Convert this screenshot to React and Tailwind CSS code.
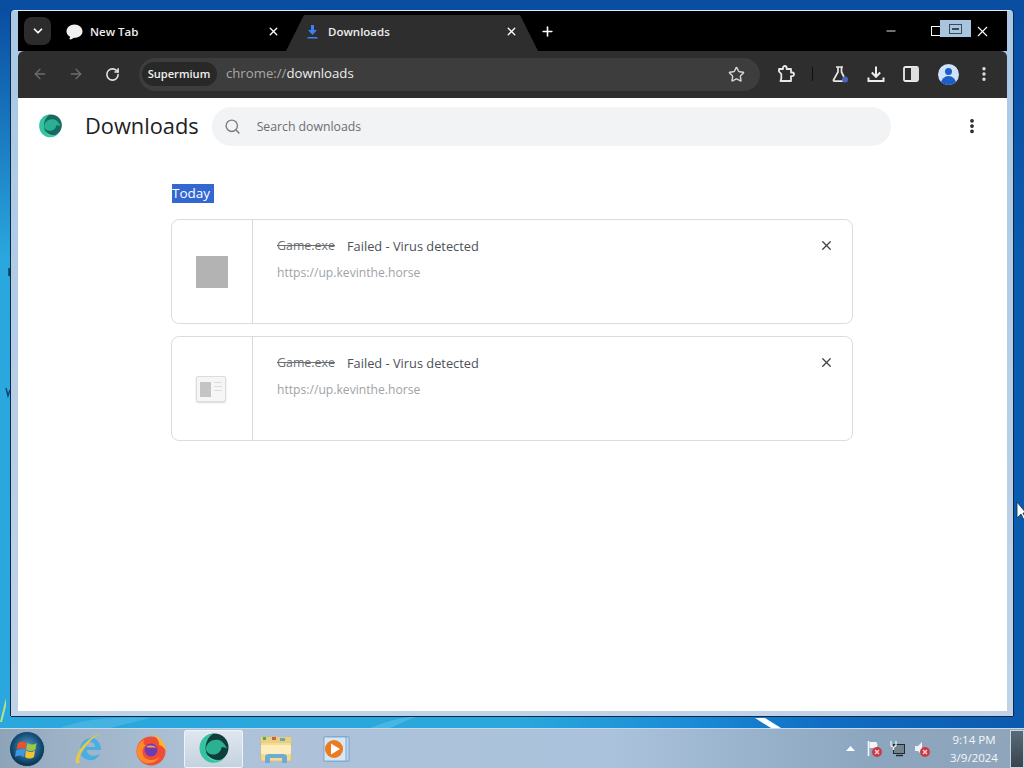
import React from "react";
import { ArrowLeft, ArrowRight, RotateCw, Star, MoreVertical, X, Plus, ChevronDown, Search, Minus } from "lucide-react";

const font = "font-['Open_Sans','Noto_Sans',sans-serif]";

function Logo({ size = 24, dark = false }) {
  return (
    <svg width={size} height={size} viewBox="0 0 32 32">
      <circle cx="16.500" cy="14.500" r="14" fill={dark ? "#0f3d3c" : "#166a5f"} />
      <path d="M15 .7C7 1 1.500 7.500 1.500 15c0 7 4.500 13 11 14.500 5 1 10-.5 13-3.500-5 2-12 1-16-4C6 17 7 6 15 .7Z" fill="#34c4a2" />
      <path d="M8 15c1-6 7-9.500 13-8 3 1 6 4 8 8.500-2-1-4-1.500-5.500-1-.5 4-4 7.500-9 7C10 21 7.500 18 8 15Z" fill="#2bb092" />
      <path d="M9 22c2 4 6 6 10 5.500 2.500 0 5-1 6.500-1.500-5 2.500-12 2-16.500-4Z" fill="#9ae6d2" />
    </svg>
  );
}

function WinFlag() {
  return (
    <svg width="36" height="36" viewBox="0 0 36 36">
      <defs>
        <radialGradient id="orb" cx="50%" cy="45%" r="55%">
          <stop offset="0%" stopColor="#5a9fd4" />
          <stop offset="70%" stopColor="#165078" />
          <stop offset="100%" stopColor="#0b2c42" />
        </radialGradient>
      </defs>
      <circle cx="18" cy="18" r="17.500" fill="url(#orb)" stroke="#a5c0d4" strokeWidth="0.7" />
      <path d="M9 12c3-2 6-2 8.500 0l-1 6.500c-3-2-6-2-9 0Z" fill="#e8532a" />
      <path d="M18.500 12c3 2 6 2 9 0l-1 6.500c-3 2-6 2-9 0Z" fill="#9cc93f" />
      <path d="M7 19.500c3-2 6-2 9 0l-1 6.500c-3-2-6-2-9 0Z" fill="#3c9ae0" />
      <path d="M17 19.500c3 2 6 2 9 0l-1 6.500c-3 2-6 2-9 0Z" fill="#f5c22f" />
    </svg>
  );
}

function IE() {
  return (
    <svg width="32" height="36" viewBox="0 0 32 36">
      <path d="M6 20c0-8 5-13 11-13s10 5 10 12H13c0 6 8 8 13 3-2 6-7 8-11 7-6-1-9-5-9-9Zm7-4h8c0-3-2-5-4-5s-4 2-4 5Z" fill="#49aee2" />
      <path d="M2 32C0 24 12 6 28 2c-7 3-10 6-14 11C9 19 3 27 6 31c-1 1-3 2-4 1Z" fill="#e8c84a" />
    </svg>
  );
}

function Firefox() {
  return (
    <svg width="32" height="34" viewBox="0 0 32 34">
      <circle cx="16" cy="19" r="14.500" fill="#ef4d35" />
      <path d="M16 1c7 3 15 8 15 18-2-4-5-6-7-6 1-3-2-8-8-12Z" fill="#fbb63a" />
      <path d="M2 17c1-5 4-8 7-9-1 3 0 5 2 5-4 3-5 9-1 13 4 3 11 3 15-2-3 7-12 9-17 6-5-3-7-8-6-13Z" fill="#ff8a2b" />
      <circle cx="16" cy="18" r="6.500" fill="#6f3bb5" />
      <path d="M11 15c3-2 8-2 10 1-3-1-7 0-10-1Z" fill="#f5a33a" />
    </svg>
  );
}

function Folder() {
  return (
    <svg width="32" height="30" viewBox="0 0 32 30">
      <path d="M1 3h30v24H1Z" fill="#f4db8d" stroke="#d9bd6c" strokeWidth="0.6" />
      <rect x="1" y="3" width="30" height="6" fill="#e9cf80" />
      <rect x="3" y="3" width="3" height="3" fill="#5aa845" />
      <rect x="12" y="3" width="4" height="3" fill="#c9653a" />
      <rect x="20" y="4" width="5" height="3" fill="#6aa3c9" />
      <rect x="1" y="11" width="30" height="9" fill="#fbeebc" />
      <path d="M5 29v-6c0-2 2-3 4-3h14c2 0 4 1 4 3v6h-5v-5H10v5Z" fill="#6eaad6" />
    </svg>
  );
}

function Media() {
  return (
    <svg width="28" height="26" viewBox="0 0 28 26">
      <rect x="5" y="1" width="22" height="24" fill="#bcd7ee" stroke="#6e9dc6" strokeWidth="0.8" />
      <rect x="2" y="1" width="22" height="24" fill="#d5e6f4" stroke="#6e9dc6" strokeWidth="0.8" />
      <circle cx="12" cy="13" r="9" fill="#ec7a1f" />
      <path d="M9 7.500l9 5.500-9 5.500Z" fill="#fff" />
    </svg>
  );
}

function Badge({ x, y }) {
  return (
    <g>
      <circle cx={x} cy={y} r="5" fill="#c93a44" />
      <path d={`M${x - 2} ${y - 2}l4 4m0-4l-4 4`} stroke="#f7dada" strokeWidth="1.300" />
    </g>
  );
}

function TrayFlag() {
  return (
    <svg width="16" height="18" viewBox="0 0 16 18">
      <path d="M1.500 1v15" stroke="#f5f5f5" strokeWidth="1.600" />
      <path d="M2.500 2h7l1 3-1 3h-7Z" fill="#f5f5f5" />
      <Badge x={10} y={12} />
    </svg>
  );
}

function TrayNet() {
  return (
    <svg width="16" height="18" viewBox="0 0 16 18">
      <rect x="3.500" y="4.500" width="11" height="9" fill="#75838f" stroke="#1f2a33" />
      <path d="M6 15.500h7" stroke="#1f2a33" strokeWidth="1.500" />
      <path d="M1 1v4a2 2 0 002 2h1a2 2 0 002-2V1M3.500 7v3" stroke="#f2f2f2" fill="none" strokeWidth="1.200" />
    </svg>
  );
}

function TraySpeaker() {
  return (
    <svg width="17" height="18" viewBox="0 0 17 18">
      <path d="M1 6h3l4-4v13l-4-4H1Z" fill="#eef1f4" />
      <Badge x={11} y={12} />
    </svg>
  );
}

function ExtensionIcon() {
  return (
    <svg width="18" height="18" viewBox="0 0 18 18" fill="none" stroke="#e8e8e8" strokeWidth="1.800" strokeLinejoin="round">
      <path d="M2 4h4V2.800a1.800 1.800 0 013.600 0V4H14v3.500h1.200a1.800 1.800 0 010 3.600H14V16H3.500l.8-2.500V9L2 6.500Z" />
    </svg>
  );
}

function FlaskIcon() {
  return (
    <svg width="18" height="18" viewBox="0 0 18 18">
      <path d="M5 2h7M7 2v5l-4.500 8c-.3.700 0 1.200.8 1.200H13M10.500 2v5l2.500 5" fill="none" stroke="#e8e8e8" strokeWidth="1.700" />
      <circle cx="14" cy="14.500" r="3" fill="#4a66c0" />
    </svg>
  );
}

function DownloadIcon({ color = "#ededed" }) {
  return (
    <svg width="18" height="18" viewBox="0 0 18 18" fill="none" stroke={color} strokeWidth="2">
      <path d="M9 1.500v10M4.800 7.500L9 11.800l4.200-4.300M1.500 12.500v3.500h15v-3.500" />
    </svg>
  );
}

function TabDownload() {
  return (
    <svg width="11" height="14" viewBox="0 0 11 14" className="shrink-0">
      <path d="M4 0h3v5h3L5.500 10 1 5h3Z" fill="#3b82f0" />
      <rect x="0.500" y="12" width="10" height="1.500" fill="#3b82f0" />
    </svg>
  );
}

function SidePanelIcon() {
  return (
    <svg width="16" height="16" viewBox="0 0 16 16">
      <rect x="1" y="1" width="14" height="14" rx="1.500" fill="none" stroke="#ededed" strokeWidth="1.800" />
      <rect x="8" y="1" width="7" height="14" fill="#dedede" />
    </svg>
  );
}

function DownloadCard({ second }) {
  return (
    <div className="flex h-[105px] rounded-lg border border-[#dadce0] bg-white">
      <div className={`flex w-[81px] shrink-0 items-center justify-center border-r border-[#d5d7da] ${second ? "pr-[2px]" : ""}`}>
        {second ? (
          <div className="flex h-[26px] w-[30px] gap-[3px] rounded-[2px] border border-[#dcdcdc] bg-[#f6f6f6] p-[3px] shadow-[0_1px_2px_rgba(0,0,0,0.15)]">
            <div className="mt-[2px] h-[15px] w-[11px] bg-[#c4c4c4]" />
            <div className="flex flex-1 flex-col items-end gap-[3px] pt-[2px]">
              <div className="h-[1px] w-full bg-[#dcdcdc]" />
              <div className="h-[1px] w-full bg-[#dcdcdc]" />
              <div className="h-[1px] w-full bg-[#dcdcdc]" />
            </div>
          </div>
        ) : (
          <div className="h-[32px] w-[32px] bg-[#b3b3b3]" />
        )}
      </div>
      <div className="relative flex-1 pl-[24px] pt-[16px] pr-[16px]">
        <div className={`flex items-center leading-[20px] ${font}`}>
          <span className="text-[12.400px] text-[#6b6f73] line-through">Game.exe</span>
          <span className="ml-[12px] text-[12.800px] text-[#4d5156]">Failed - Virus detected</span>
        </div>
        <div className={`mt-[7px] text-[12.150px] leading-[20px] text-[#a0a3a7] ${font}`}>https://up.kevinthe.horse</div>
        <X size={15} strokeWidth={2} className="absolute right-[18px] top-[18px] text-[#3c4043]" />
      </div>
    </div>
  );
}

export default function App() {
  return (
    <div className={`relative flex h-[768px] w-[1024px] flex-col overflow-hidden ${font}`}>
      <div className="relative flex min-h-0 flex-1 flex-col bg-[linear-gradient(180deg,#0a4ea2_0px,#0a4ea2_12px,rgba(10,78,162,0)_260px),linear-gradient(90deg,#2aa8de_0%,#2aa8dc_50%,#1a8ad6_68%,#0f6fc4_80%,#0a5aae_100%)] pt-[10px] pl-[11px] pr-[11px] pb-[12px]">
        <svg className="absolute inset-0" width="1024" height="728" viewBox="0 0 1024 728">
          <path d="M755 718h10l16 10h-10Z" fill="#ffffff" />
          <path d="M60 728c20-8 50-12 90-10l-40 10Z" fill="#ffffff" fillOpacity="0.13" />
          <path d="M370 728c20-8 30-10 50-12-15 4-20 8-30 12Z" fill="#ffffff" fillOpacity="0.15" />
          <path d="M0 722l6-24v8l-4 16Z" fill="#bde08a" />
          <path d="M9 268v8l1-2Z" stroke="#0d3b66" strokeWidth="1.500" />
          <path d="M6 388l2 8 2-6" stroke="#0d3b66" strokeWidth="1.300" fill="none" />
        </svg>
        <div className="relative flex min-h-0 flex-1 flex-col rounded-t-[4px] border-t border-[#dfeaf3] bg-[linear-gradient(180deg,#a9c9e6,#c2d2e6)] pb-[5px] pl-[7px] pr-[6px] shadow-[-1px_0_0_#0b2a4a,1px_0_0_#0b2a4a,0_1px_0_#0b2a4a]">
          <div className="flex h-[40px] bg-black">
            <div className="ml-[6px] mt-[6px] flex h-[28px] w-[27px] items-center justify-center rounded-[8px] bg-[#2c2c2c]">
              <ChevronDown size={14} strokeWidth={3} className="text-white" />
            </div>
            <div className="flex w-[235px] items-center pl-[15px] pr-[6px] pt-[1px]">
              <svg width="17" height="16" viewBox="0 0 17 16" className="shrink-0">
                <path d="M8.500 0.500c4.500 0 8 3 8 6.800 0 4-3.500 6.500-8 6.500-1 0-2 .500-3 1.500-.8.300-1.500 0-2.500-.500 1-.5 1.200-1.200.8-2.300C1.500 11.300.5 9.500.5 7.300.5 3.500 4 .5 8.500.5Z" fill="#f1f1f1" />
              </svg>
              <span className="ml-[7px] flex-1 text-[11.500px] font-semibold text-[#eeeeee]">New Tab</span>
              <X size={13} strokeWidth={2.500} className="text-white" />
            </div>
            <div className="mt-[4px] flex h-[36px] w-[252px] items-center bg-[#2e2e2e] pb-[3px] pl-[21px] pr-[20px] [clip-path:polygon(18px_0,234px_0,252px_100%,0_100%)]">
              <TabDownload />
              <span className="ml-[10px] flex-1 text-[11.500px] font-semibold text-[#eeeeee]">Downloads</span>
              <X size={13} strokeWidth={2.500} className="text-white" />
            </div>
            <div className="ml-[2px] flex items-center">
              <Plus size={15} strokeWidth={2.500} className="text-white" />
            </div>
            <div className="ml-auto flex items-center pr-[16px]">
              <Minus size={14} strokeWidth={1.500} className="text-white" />
              <div className="ml-[33px] h-[10px] w-[10px] border border-white" />
              <X size={17} strokeWidth={1.500} className="ml-[33px] text-white" />
            </div>
          </div>
          <div className="flex h-[47px] items-center rounded-t-[6px] bg-[#2e2e2e] pb-[1px] pl-[14px] pr-[14px]">
            <ArrowLeft size={16} strokeWidth={2} className="text-[#6d6d6d]" />
            <ArrowRight size={16} strokeWidth={2} className="ml-[20px] text-[#6d6d6d]" />
            <RotateCw size={15} strokeWidth={2.500} className="ml-[21px] text-[#e4e4e4]" />
            <div className="ml-[19px] flex h-[33px] w-[622px] items-center rounded-full bg-[#3d3d3d] pl-[3px] pr-[15px]">
              <div className="flex h-[24px] w-[75px] items-center justify-center rounded-full bg-[#282828] pr-[1px] text-[11.100px] font-semibold text-[#f0f0f0]">Supermium</div>
              <div className="ml-[9px] flex-1 text-[13.200px] text-[#a8a8a8]">
                chrome://<span className="text-[#eeeeee]">downloads</span>
              </div>
              <Star size={17} strokeWidth={2} className="text-[#d6d6d6]" />
            </div>
            <div className="ml-[17px]">
              <ExtensionIcon />
            </div>
            <div className="ml-[17px] h-[14px] w-[1px] bg-[#111111]" />
            <div className="ml-[18px]">
              <FlaskIcon />
            </div>
            <div className="ml-[18px]">
              <DownloadIcon />
            </div>
            <div className="ml-[18px]">
              <SidePanelIcon />
            </div>
            <div className="relative ml-[19px] h-[21px] w-[21px] overflow-hidden rounded-full bg-[#cfe2fa]">
              <div className="absolute left-[7px] top-[4px] h-[7px] w-[7px] rounded-full bg-[#1a5fc7]" />
              <div className="absolute left-[3px] top-[12px] h-[10px] w-[15px] rounded-t-full bg-[#1a5fc7]" />
            </div>
            <MoreVertical size={18} strokeWidth={2.500} className="ml-[16px] text-[#e4e4e4]" />
          </div>
          <div className="min-h-0 flex-1 bg-white">
            <div className="flex h-[57px] items-center pl-[20px]">
              <Logo size={25} />
              <h1 className="ml-[22px] text-[21.800px] font-normal text-[#202124]">Downloads</h1>
              <div className="ml-[13px] flex h-[39px] w-[679px] items-center rounded-full bg-[#f1f3f4] pl-[12px]">
                <Search size={17} strokeWidth={2} className="text-[#7a7e83]" />
                <span className="ml-[16px] mt-[2px] text-[12.250px] text-[#6a6e73]">Search downloads</span>
              </div>
              <MoreVertical size={18} strokeWidth={3} className="ml-[72px] -mt-[2px] text-[#202124]" />
            </div>
            <div className="ml-[153px] mt-[29px] w-[682px]">
              <span className="ml-[1px] block w-[42px] bg-[#3367d1] text-[13.500px] leading-[19px] text-white">Today</span>
              <div className="mt-[16px] flex flex-col gap-[12px]">
                <DownloadCard />
                <DownloadCard second />
              </div>
            </div>
          </div>
        </div>
        <div className="absolute left-[940px] top-[20px] flex h-[17px] w-[31px] items-center justify-center bg-[#a9c5de]">
          <div className="flex h-[10px] w-[13px] items-center justify-center border border-[#3b4a5a]">
            <div className="h-[2px] w-[7px] bg-[#3b4a5a]" />
          </div>
        </div>
        <svg className="absolute left-[1016px] top-[501px]" width="10" height="20" viewBox="0 0 10 20">
          <path d="M1 1v16l4-4 3 6 2-1-3-6h3Z" fill="#fff" stroke="#0a2a55" strokeWidth="0.8" />
        </svg>
      </div>
      <div className="flex h-[40px] items-center border-t border-[#c9d8e6] bg-[linear-gradient(90deg,#8da3b8_0%,#9bb0c5_5%,#aec2d8_20%,#aac2dc_60%,#8ca6bf_85%,#8fa5ba_100%)]">
        <div className="ml-[9px] flex w-[36px] justify-center">
          <WinFlag />
        </div>
        <div className="ml-[29px]">
          <IE />
        </div>
        <div className="ml-[29px]">
          <Firefox />
        </div>
        <div className="ml-[17px] flex h-[38px] w-[59px] items-center justify-center rounded-[2px] border border-[#eef3f8] bg-[linear-gradient(180deg,#dfe7ef,#c4d2e0)]">
          <Logo size={32} dark />
        </div>
        <div className="ml-[17px]">
          <Folder />
        </div>
        <div className="ml-[30px]">
          <Media />
        </div>
        <div className="ml-auto flex items-center">
          <div className="h-[5px] w-[9px] bg-white [clip-path:polygon(50%_0,100%_100%,0_100%)]" />
          <div className="ml-[12px]">
            <TrayFlag />
          </div>
          <div className="ml-[7px]">
            <TrayNet />
          </div>
          <div className="ml-[8px]">
            <TraySpeaker />
          </div>
          <div className="ml-[19px] flex w-[48px] flex-col items-center text-center text-[11.500px] leading-[18px] text-[#f4f7fa]">
            <span>9:14 PM</span>
            <span>3/9/2024</span>
          </div>
          <div className="ml-[12px] h-[38px] w-[14px] border border-[#cbd5df] bg-[linear-gradient(180deg,#5a6a78,#38444f)]" />
        </div>
      </div>
    </div>
  );
}
